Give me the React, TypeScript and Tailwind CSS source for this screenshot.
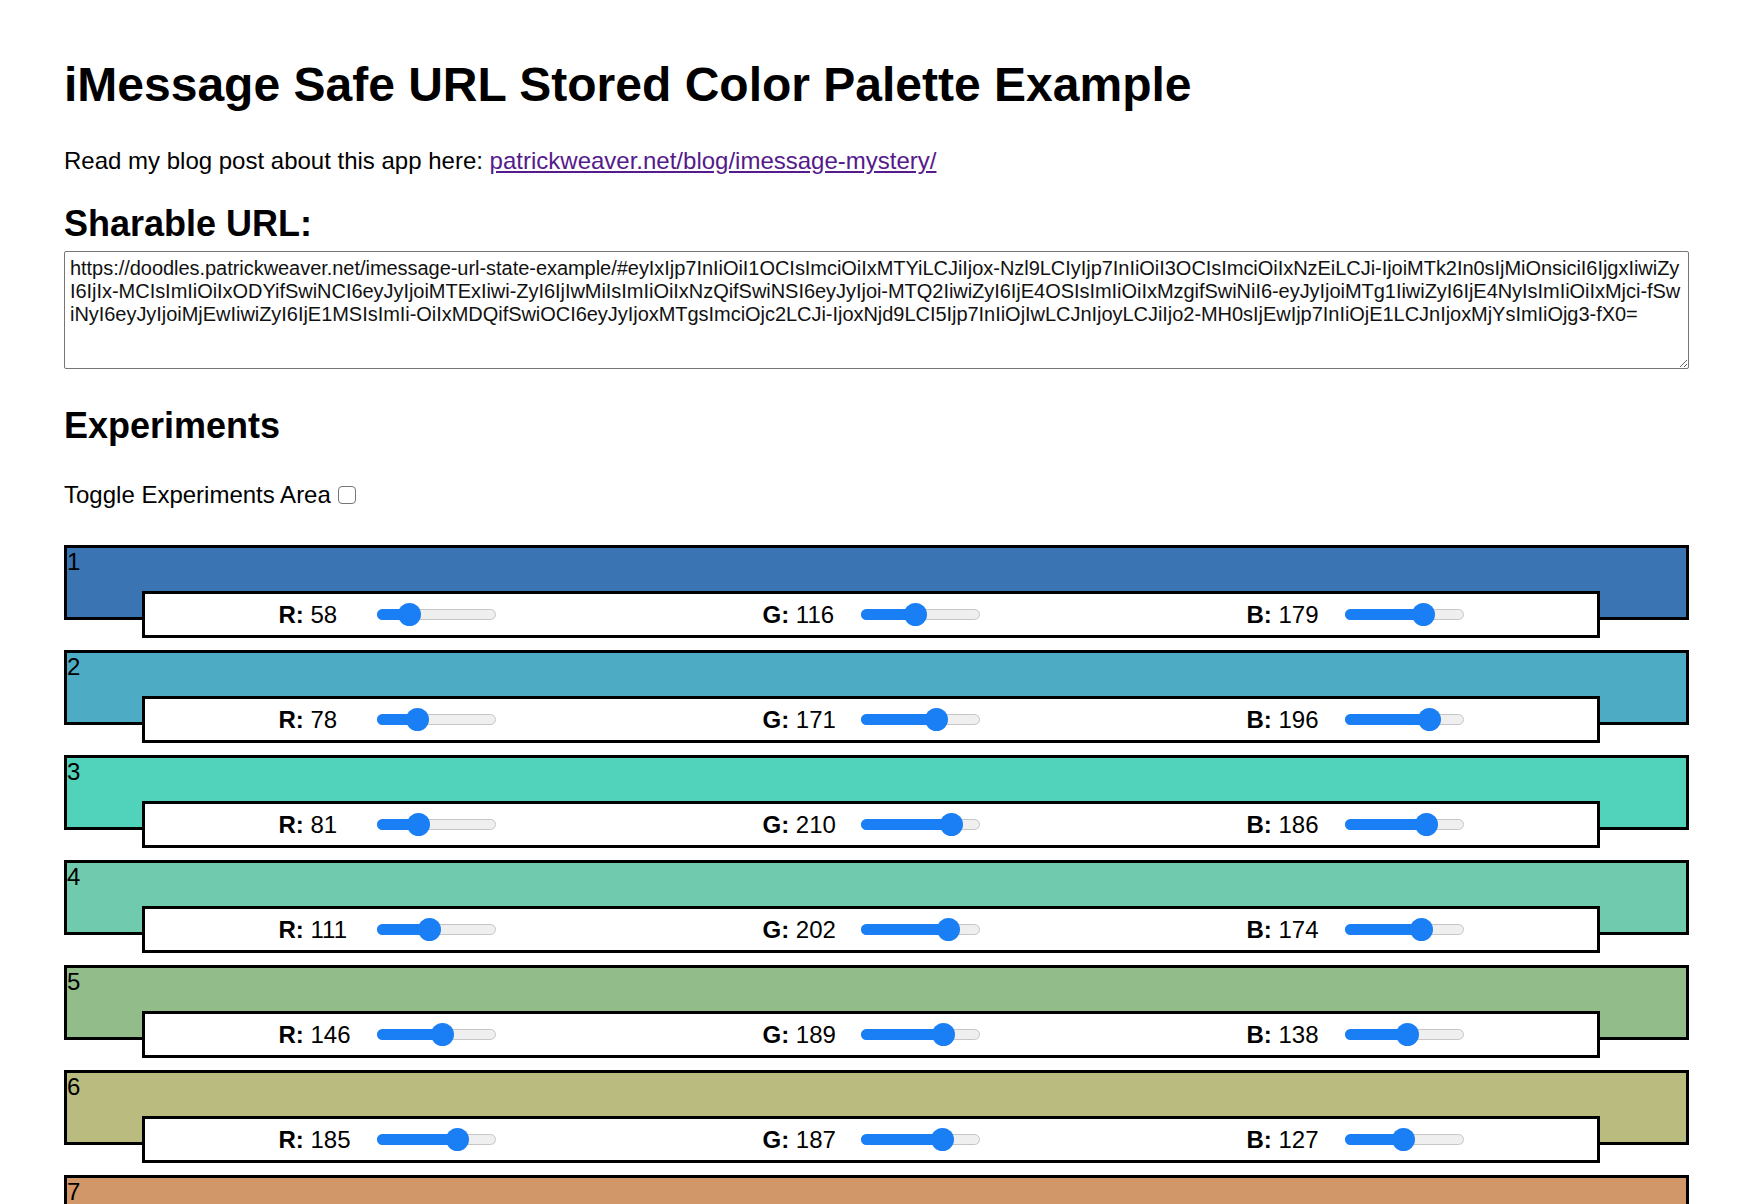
import React from "react";

type Rgb = { r: string | number; g: string | number; b: string | number };

const palette: Record<string, Rgb> = {
  "1": { r: "58", g: "116", b: 179 },
  "2": { r: "78", g: "171", b: "196" },
  "3": { r: "81", g: "210", b: "186" },
  "4": { r: "111", g: "202", b: "174" },
  "5": { r: "146", g: "189", b: "138" },
  "6": { r: "185", g: "187", b: "127" },
  "7": { r: "210", g: "151", b: "104" },
  "8": { r: 118, g: 76, b: 167 },
  "9": { r: 20, g: 2, b: 60 },
  "10": { r: 15, g: 126, b: 87 },
};

// base64 of the palette, split with a dash every 40 chars
const encoded = (btoa(JSON.stringify(palette)).match(/.{1,40}/g) || []).join("-");
const shareUrl = "https://doodles.patrickweaver.net/imessage-url-state-example/#" + encoded;

function Slider({ value }: { value: number }) {
  const pos = 11.5 + (value / 255) * 96;
  return (
    <div className="relative w-[119px] h-[23px] shrink-0">
      <div className="absolute left-0 right-0 top-[6px] h-[11px] rounded-full bg-[#efefef] border border-[#c6c6c6]" />
      <div className="absolute left-0 top-[6px] h-[11px] rounded-full bg-[#1a7ef5]" style={{ width: pos }} />
      <div className="absolute top-0 h-[23px] w-[23px] rounded-full bg-[#1a7ef5]" style={{ left: pos - 11.5 }} />
    </div>
  );
}

function Channel({ name, value }: { name: string; value: number }) {
  return (
    <div className="flex items-center justify-center">
      <div className="w-[98px] text-[24px] leading-[28px]">
        <b>{name}:</b> {value}
      </div>
      <Slider value={value} />
    </div>
  );
}

function ColorBlock({ id, color }: { id: string; color: Rgb }) {
  const r = Number(color.r);
  const g = Number(color.g);
  const b = Number(color.b);
  return (
    <div className="h-[75px] border-[3px] border-black mb-[30px]" style={{ backgroundColor: `rgb(${r}, ${g}, ${b})` }}>
      <div className="text-[24px] leading-[28px]">{id}</div>
      <div className="mt-[15px] ml-[75px] w-[1458px] h-[47px] border-[3px] border-black bg-white grid grid-cols-3 items-center">
        <Channel name="R" value={r} />
        <Channel name="G" value={g} />
        <Channel name="B" value={b} />
      </div>
    </div>
  );
}

export default function App() {
  return (
    <div className="min-h-screen bg-white text-black font-['Liberation_Sans',Arial,sans-serif] pl-[64px] pr-[61px] pt-[57px] pb-[40px]">
      <h1 className="text-[48px] leading-[55px] font-bold">iMessage Safe URL Stored Color Palette Example</h1>

      <p className="mt-[35px] text-[24px] leading-[28px]">
        Read my blog post about this app here:{" "}
        <a href="#" className="text-[#551a8b] underline">
          patrickweaver.net/blog/imessage-mystery/
        </a>
      </p>

      <h2 className="mt-[28px] text-[36px] leading-[41px] font-bold">Sharable URL:</h2>
      <textarea
        readOnly
        value={shareUrl}
        className="block mt-[7px] w-full h-[118px] border border-[#767676] rounded-[2px] p-[5px] text-[20px] leading-[23px] tracking-[-0.04px] text-[#111] break-all font-['Liberation_Sans',Arial,sans-serif]"
      />

      <h2 className="mt-[36px] text-[36px] leading-[41px] font-bold">Experiments</h2>
      <div className="mt-[35px] flex items-center text-[24px] leading-[28px]">
        <span>Toggle Experiments Area</span>
        <span className="ml-[7px] w-[18px] h-[18px] border border-[#767676] rounded-[4px] bg-white" />
      </div>

      <div className="mt-[36px]">
        {Object.entries(palette).map(([id, color]) => (
          <ColorBlock key={id} id={id} color={color} />
        ))}
      </div>
    </div>
  );
}
